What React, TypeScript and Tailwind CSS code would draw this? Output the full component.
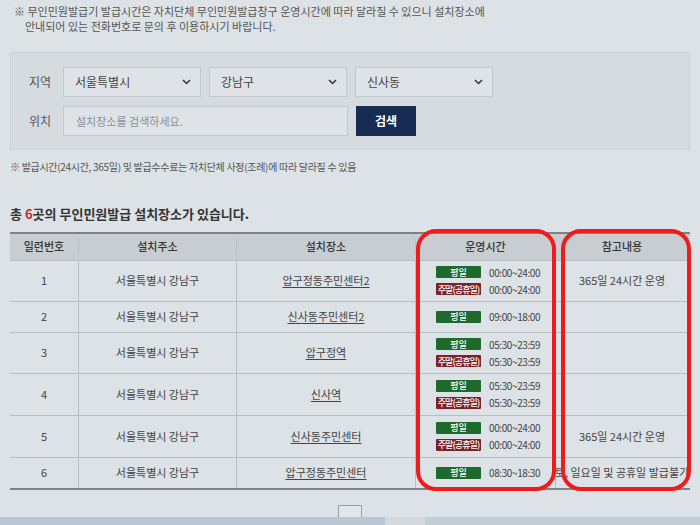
import React from 'react'

type Slot = { kind: 'weekday' | 'weekend'; time: string }
type Row = { no: number; addr: string; place: string; slots: Slot[]; note: string; h: string }

const rows: Row[] = [
    { no: 1, addr: '서울특별시 강남구', place: '압구정동주민센터2', slots: [{ kind: 'weekday', time: '00:00~24:00' }, { kind: 'weekend', time: '00:00~24:00' }], note: '365일 24시간 운영', h: 'h-[41px]' },
    { no: 2, addr: '서울특별시 강남구', place: '신사동주민센터2', slots: [{ kind: 'weekday', time: '09:00~18:00' }], note: '', h: 'h-[31px]' },
    { no: 3, addr: '서울특별시 강남구', place: '압구정역', slots: [{ kind: 'weekday', time: '05:30~23:59' }, { kind: 'weekend', time: '05:30~23:59' }], note: '', h: 'h-[41px]' },
    { no: 4, addr: '서울특별시 강남구', place: '신사역', slots: [{ kind: 'weekday', time: '05:30~23:59' }, { kind: 'weekend', time: '05:30~23:59' }], note: '', h: 'h-[42px]' },
    { no: 5, addr: '서울특별시 강남구', place: '신사동주민센터', slots: [{ kind: 'weekday', time: '00:00~24:00' }, { kind: 'weekend', time: '00:00~24:00' }], note: '365일 24시간 운영', h: 'h-[42px]' },
    { no: 6, addr: '서울특별시 강남구', place: '압구정동주민센터', slots: [{ kind: 'weekday', time: '08:30~18:30' }], note: '토, 일요일 및 공휴일 발급불가', h: 'h-[33px]' },
]

const Chevron = () => (
    <svg width="9" height="6" viewBox="0 0 9 6" fill="none">
        <path d="M1 1l3.5 3.5L8 1" stroke="#333" strokeWidth="1.5" />
    </svg>
)

const Select = ({ label }: { label: string }) => (
    <div className="flex h-[30px] w-[138px] items-center justify-between border border-[#c3c8cd] bg-[#dfe3e7] pl-[11px] pr-[9px] text-[12px] text-[#444]">
        <span>{label}</span>
        <Chevron />
    </div>
)

const Badge = ({ kind }: { kind: Slot['kind'] }) =>
    kind === 'weekday' ? (
        <span className="flex h-[12px] w-[45px] items-center justify-center rounded-[1px] bg-[#1d6a2c] text-[9px] font-medium leading-none text-white">평일</span>
    ) : (
        <span className="flex h-[12px] w-[45px] items-center justify-center overflow-hidden whitespace-nowrap rounded-[1px] bg-[#7b2128] text-[9px] font-medium leading-none tracking-[-0.9px] text-white">주말(공휴일)</span>
    )

const App = () => {
    return (
        <div className="relative h-[525px] w-[700px] overflow-hidden bg-[#dde2e6] font-['Noto_Sans_CJK_KR','Noto_Sans',sans-serif] text-[#444]">
            <div className="pl-[14px] pt-[4px] text-[11px] leading-[15px] text-[#555]">
                <p>※ 무인민원발급기 발급시간은 자치단체 무인민원발급창구 운영시간에 따라 달라질 수 있으니 설치장소에</p>
                <p className="pl-[11px]">안내되어 있는 전화번호로 문의 후 이용하시기 바랍니다.</p>
            </div>

            <div className="mx-[10px] mt-[18px] flex flex-col gap-[9px] border border-[#cdd2d6] bg-[#d6dbdf] pb-[13px] pl-[18px] pt-[14px]">
                <div className="flex items-center">
                    <span className="w-[34px] text-[12px] text-[#555]">지역</span>
                    <div className="flex gap-[8px]">
                        <Select label="서울특별시" />
                        <Select label="강남구" />
                        <Select label="신사동" />
                    </div>
                </div>
                <div className="flex items-center">
                    <span className="w-[34px] text-[12px] text-[#555]">위치</span>
                    <div className="flex h-[30px] w-[285px] items-center border border-[#c3c8cd] bg-[#dfe3e7] pl-[12px] text-[11px] text-[#8a8f94]">설치장소를 검색하세요.</div>
                    <button className="ml-[8px] flex h-[30px] w-[60px] items-center justify-center bg-[#172c52] text-[12px] font-bold text-white">검색</button>
                </div>
            </div>

            <p className="ml-[10px] mt-[9px] text-[10px] tracking-[-0.3px] text-[#555]">※ 발급시간(24시간, 365일) 및 발급수수료는 자치단체 사정(조례)에 따라 달라질 수 있음</p>

            <h2 className="ml-[10px] mt-[30px] text-[13px] font-bold text-[#333]">
                총 <span className="text-[#b1302f]">6</span>곳의 무인민원발급 설치장소가 있습니다.
            </h2>

            <div className="relative mx-[10px] mt-[8px]">
                <div className="flex h-[28px] items-center border-t-2 border-[#7d8388] bg-[#c8cdd2] text-[11px] font-medium text-[#333]">
                    <div className="w-[68px] text-center">일련번호</div>
                    <div className="w-[158px] border-l border-[#b9bec3] text-center">설치주소</div>
                    <div className="w-[179px] border-l border-[#b9bec3] text-center">설치장소</div>
                    <div className="w-[140px] border-l border-[#b9bec3] text-center">운영시간</div>
                    <div className="w-[133px] border-l border-[#b9bec3] text-center">참고내용</div>
                </div>
                {rows.map((r, i) => (
                    <div key={r.no} className={`flex ${r.h} border-t border-[#b9bec3] text-[11px] text-[#444] ${i === rows.length - 1 ? 'border-b-2 border-b-[#7d8388]' : ''}`}>
                        <div className="flex w-[68px] items-center justify-center">{r.no}</div>
                        <div className="flex w-[158px] items-center justify-center border-l border-[#b9bec3]">{r.addr}</div>
                        <div className="flex w-[179px] items-center justify-center border-l border-[#b9bec3] underline underline-offset-2">{r.place}</div>
                        <div className="flex w-[140px] flex-col justify-center gap-[2px] border-l border-[#b9bec3] pl-[20px]">
                            {r.slots.map((s, j) => (
                                <div key={j} className="flex items-center gap-[8px]">
                                    <Badge kind={s.kind} />
                                    <span className="text-[10px] tracking-[-0.4px] text-[#444]">{s.time}</span>
                                </div>
                            ))}
                        </div>
                        <div className="flex w-[133px] items-center justify-center overflow-hidden whitespace-nowrap border-l border-[#b9bec3]">
                            <span className="shrink-0">{r.note}</span>
                        </div>
                    </div>
                ))}

                <div className="absolute left-[406px] top-[-3px] h-[262px] w-[140px] rounded-[20px] border-[4px] border-[#ee1c1c]" />
                <div className="absolute left-[551px] top-[-3px] h-[262px] w-[130px] rounded-[20px] border-[4px] border-[#ee1c1c]" />
            </div>

            <div className="absolute bottom-[6px] left-[338px] h-[14px] w-[24px] border border-[#9aa0a6] bg-[#e3e7ea]" />
            <div className="absolute bottom-0 left-0 flex h-[8px] w-[700px]">
                <div className="h-full w-[385px] bg-[#b9c6d3]" />
                <div className="h-full w-[40px] bg-[#d3d9de]" />
                <div className="h-full flex-1 bg-[#c3cdd6]" />
            </div>
        </div>
    )
}

export default App
